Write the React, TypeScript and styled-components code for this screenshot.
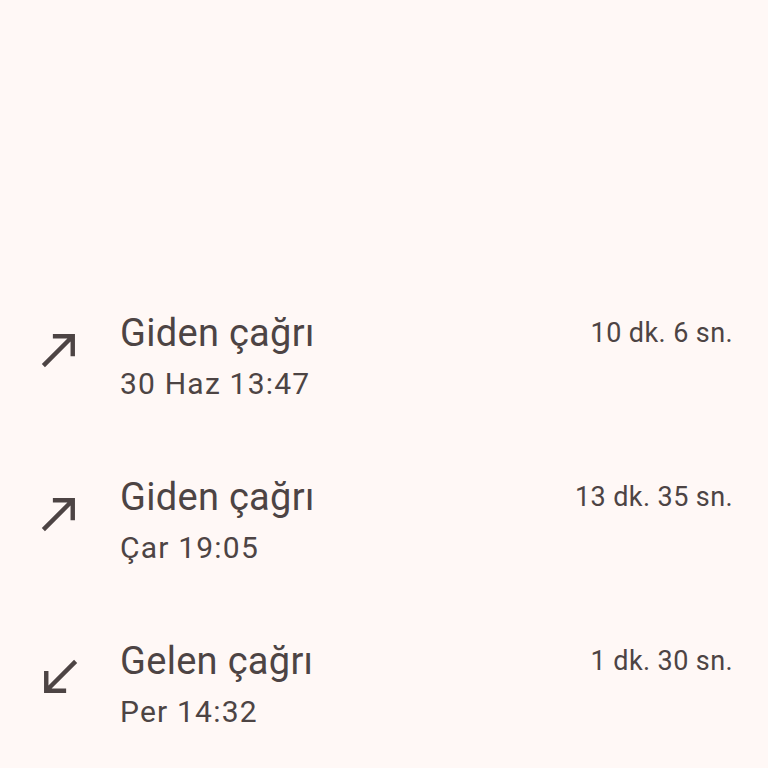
import styled, { createGlobalStyle } from 'styled-components'

const GlobalStyle = createGlobalStyle`
  body {
    margin: 0;
    background: #fff8f6;
    font-family: Roboto, "Noto Sans", sans-serif;
    color: #4d4444;
  }
`

const Page = styled.main`
  width: 768px;
  height: 768px;
  padding-top: 275px;
  box-sizing: border-box;
  overflow: hidden;
`

const Row = styled.div`
  display: grid;
  grid-template-columns: 120px 1fr auto;
  align-items: start;
  padding: 34px 35px 35px 0;
`

const IconCell = styled.div`
  display: flex;
  padding: 14px 0 0 33px;
  color: #4d4444;
`

const Texts = styled.div`
  display: flex;
  flex-direction: column;
  gap: 7px;
`

const Title = styled.div`
  font-size: 38px;
  line-height: 48px;
  letter-spacing: 0.3px;
`

const Sub = styled.div`
  font-size: 30px;
  line-height: 40px;
  letter-spacing: 1.2px;
`

const Duration = styled.div`
  font-size: 27px;
  line-height: 48px;
  letter-spacing: 0.4px;
`

type Call = { dir: 'out' | 'in'; title: string; when: string; dur: string }

const calls: Call[] = [
  { dir: 'out', title: 'Giden çağrı', when: '30 Haz 13:47', dur: '10 dk. 6 sn.' },
  { dir: 'out', title: 'Giden çağrı', when: 'Çar 19:05', dur: '13 dk. 35 sn.' },
  { dir: 'in', title: 'Gelen çağrı', when: 'Per 14:32', dur: '1 dk. 30 sn.' },
]

const Arrow = ({ dir }: { dir: 'out' | 'in' }) => (
  <svg width="53" height="53" viewBox="0 0 24 24" fill="currentColor">
    {dir === 'out' ? (
      <path d="M9 5v2h6.59L4 18.59 5.41 20 17 8.41V15h2V5z" />
    ) : (
      <path d="M20 5.41L18.59 4 7 15.59V9H5v10h10v-2H8.41z" />
    )}
  </svg>
)

const App = () => (
  <>
    <GlobalStyle />
    <Page>
      {calls.map((c, i) => (
        <Row key={i}>
          <IconCell>
            <Arrow dir={c.dir} />
          </IconCell>
          <Texts>
            <Title>{c.title}</Title>
            <Sub>{c.when}</Sub>
          </Texts>
          <Duration>{c.dur}</Duration>
        </Row>
      ))}
    </Page>
  </>
)

export default App
